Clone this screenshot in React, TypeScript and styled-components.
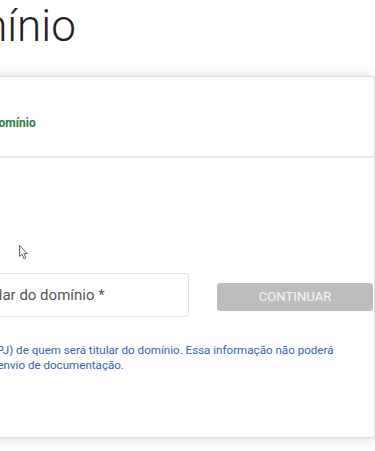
import React from "react";
import styled, { createGlobalStyle } from "styled-components";

const GlobalStyle = createGlobalStyle`
  html, body {
    margin: 0;
    padding: 0;
    background: #ffffff;
    overflow: hidden;
  }
  body {
    font-family: Roboto, "Liberation Sans", Arial, sans-serif;
    color: #333;
  }
  * { box-sizing: border-box; }
`;

const Viewport = styled.div`
  position: relative;
  width: 375px;
  height: 451px;
  overflow: hidden;
`;

const Page = styled.div`
  margin-left: -200px;
  width: 580px;
`;

const Title = styled.h1`
  margin: 0 0 0 -110px;
  padding: 4px 0 0;
  font-family: Roboto, "Liberation Sans", sans-serif;
  font-weight: 300;
  font-size: 44px;
  line-height: 44px;
  color: #222;
  white-space: nowrap;
`;

const Card = styled.section`
  margin: 28px 0 0 40px;
  width: 535px;
  background: #fff;
  border: 1px solid #dcdcdc;
  border-radius: 2px;
  box-shadow: 0 1px 14px rgba(0, 0, 0, 0.16);
`;

const CardHeader = styled.header`
  padding: 38px 35px 25px 44px;
  border-bottom: 2px solid #e6e6e6;
  font-size: 12px;
  line-height: 16px;
  font-weight: 700;
  color: #2e7d3c;
  white-space: nowrap;
`;

const CardBody = styled.div`
  padding: 115px 3px 64px 35px;
`;

const FieldRow = styled.div`
  display: grid;
  grid-template-columns: 56px 229px 156px;
  column-gap: 28px;
  align-items: center;
`;

const Select = styled.div`
  height: 44px;
  border: 1px solid #e0e0e0;
  border-radius: 3px;
`;

const Input = styled.input`
  height: 44px;
  width: 100%;
  padding: 0 12px;
  border: 1px solid #e0e0e0;
  border-radius: 3px;
  font-family: Roboto, "Liberation Sans", sans-serif;
  font-size: 15px;
  color: #333;
  background: #fff;
  outline: none;
  &::placeholder {
    color: #555;
    opacity: 1;
  }
`;

const Button = styled.button`
  height: 28px;
  margin-top: 3px;
  border: none;
  border-radius: 3px;
  background: #bdbdbd;
  color: #f7f7f7;
  font-family: Roboto, "Liberation Sans", sans-serif;
  font-size: 13px;
  font-weight: 400;
  letter-spacing: 0.1px;
  text-transform: uppercase;
  cursor: default;
`;

const Help = styled.p`
  margin: 26px 0 0 8px;
  font-size: 11.6px;
  line-height: 15px;
  color: #3562b3;
  white-space: nowrap;
`;

const Pointer = styled.svg`
  position: absolute;
  left: 19px;
  top: 245px;
`;

export default function App() {
  return (
    <>
      <GlobalStyle />
      <Viewport>
        <Page>
          <Title>Registro de domínio</Title>
          <Card>
            <CardHeader>Informe o titular do domínio</CardHeader>
            <CardBody>
              <FieldRow>
                <Select />
                <Input placeholder="Titular do domínio *" />
                <Button disabled>Continuar</Button>
              </FieldRow>
              <Help>
                Informe o CPF (ou CNPJ) de quem será titular do domínio. Essa informação não poderá
                <br />
                ser alterada após seu envio de documentação.
              </Help>
            </CardBody>
          </Card>
        </Page>
        <Pointer width="10" height="15" viewBox="0 0 10 15">
          <path
            d="M0.5 0.5 L0.5 11.5 L3 9.2 L5 13.8 L6.8 13 L4.9 8.6 L8.3 8.6 Z"
            fill="#fff"
            stroke="#555"
            strokeWidth="0.9"
            strokeLinejoin="round"
          />
        </Pointer>
      </Viewport>
    </>
  );
}
